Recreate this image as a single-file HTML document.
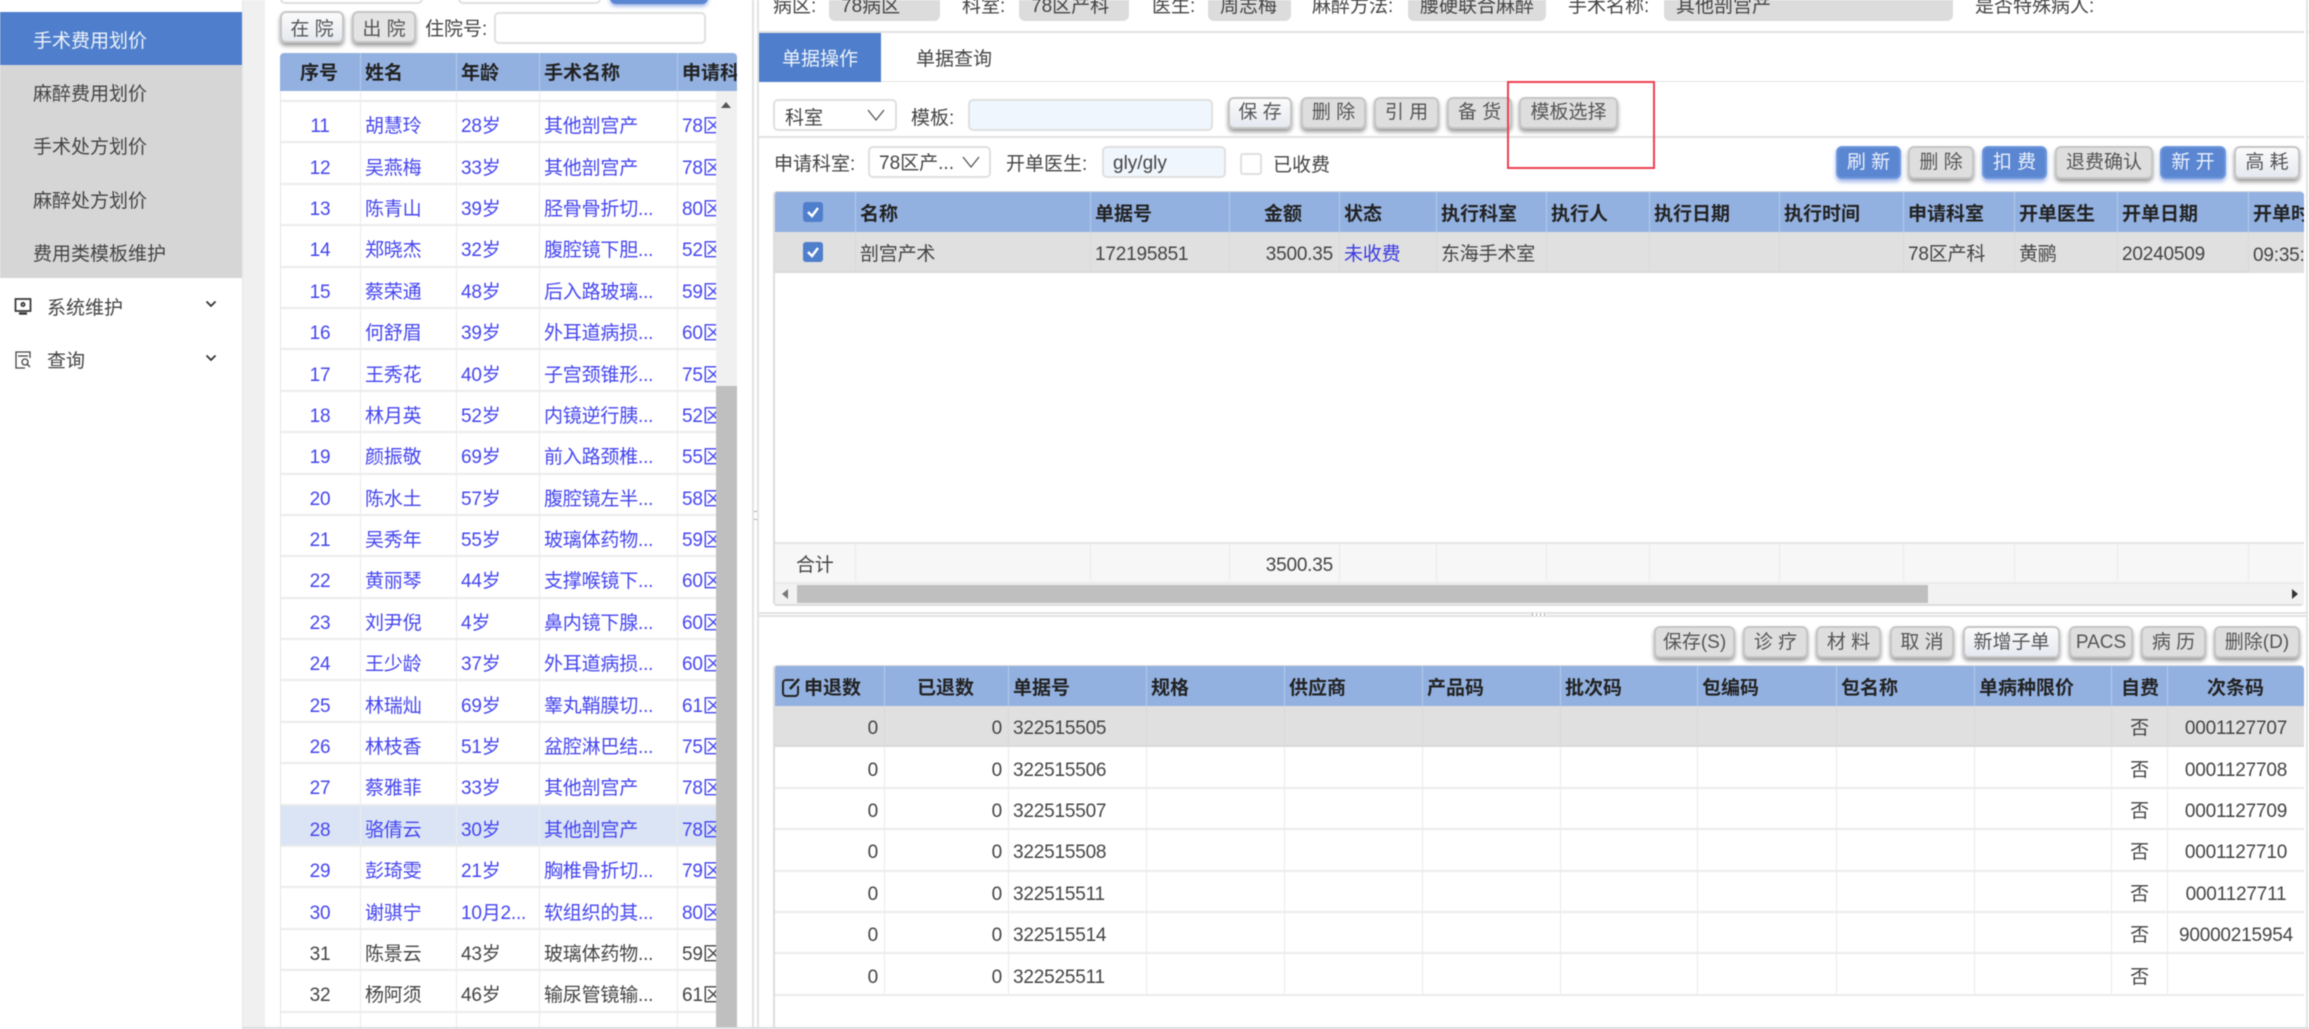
<!DOCTYPE html>
<html lang="zh"><head><meta charset="utf-8"><title>手术费用划价</title>
<style>
html,body{margin:0;padding:0;width:2309px;height:1029px;overflow:hidden;background:#fff}
body{position:relative;font:19px/26px "Liberation Sans","Noto Sans CJK SC",sans-serif;color:#444;filter:blur(.4px)}
.a{position:absolute;box-sizing:border-box;white-space:nowrap}
.nav{left:0;width:242px;height:53.3px;line-height:59px;padding-left:33px;background:#d6d6d6;color:#444}
.f{border:2px solid #e0e0e0;border-radius:5px;background:#fff;height:32px}
.g{background:#dcdcdc;border-radius:0 0 6px 6px;height:21px;top:0;line-height:14px;padding-left:12px;color:#444}
.l{line-height:26px;color:#444}
.b{box-sizing:border-box;position:absolute;white-space:nowrap;text-align:center;border:2px solid #c6c6c6;border-radius:6px;background:#dedede;color:#555;box-shadow:0 3px 4px rgba(0,0,0,.4)}
.b.w{background:linear-gradient(#fbfbfb,#e6e9f0)}
.b.u{background:#5b86d2;border-color:#6f97dc;color:#eaf0fb;box-shadow:0 3px 4px rgba(70,110,210,.5)}
.t1{height:32px;top:97px;line-height:28px}.t2{height:33px;top:146px;line-height:29px}.t3{height:32px;top:626px;line-height:30px}
table{position:absolute;border-collapse:separate;border-spacing:0;table-layout:fixed}
td,th{box-sizing:border-box;padding:0 0 0 4px;white-space:nowrap;overflow:hidden;border-right:1px solid #ebebeb;border-bottom:2px solid #ebebeb;font-weight:normal;text-align:left}
th{background:#93b1e0;font-weight:bold;color:#222;border-right:1px solid #b4c9ea;border-bottom:0}
.c{text-align:center;padding:0}.r{text-align:right;padding:0 6px 0 0}
.n td{letter-spacing:-.2px}
#lh th{padding-top:3px}
#t1 th,#t2 th{padding-top:6px}
#lt td{height:41.4px;color:#4545f0;padding-top:11px}
#lt tr.k td{color:#444}
#lt tr.s td{background:#dae4f4}
#t1 td,#t2 td{height:41.4px;padding-top:7px}
#t1b td{padding-top:6px;border-top:2px solid #e4e4e4}
.gy td{background:#e0e0e0;border-color:#dadada}
.cb{display:block;position:absolute;width:20px;height:20px;border-radius:3px;background:#4f7fcc}
.sh{position:absolute}
</style></head>
<body>
<!-- sidebar -->
<div class="a nav" style="top:12px;background:#4f7fcc;color:#eef3fb;height:53px">手术费用划价</div>
<div class="a nav" style="top:65px">麻醉费用划价</div>
<div class="a nav" style="top:118.3px">手术处方划价</div>
<div class="a nav" style="top:171.6px">麻醉处方划价</div>
<div class="a nav" style="top:224.9px">费用类模板维护</div>
<div class="a" style="left:47px;top:296px">系统维护</div>
<div class="a" style="left:47px;top:349px">查询</div>
<svg class="sh" style="left:14px;top:297px" width="20" height="20" viewBox="0 0 20 20" fill="none" stroke="#333" stroke-width="1.7"><rect x="1.500" y="2" width="15" height="12"/><circle cx="9" cy="7.500" r="1.600"/><path d="M5 16.500h8" stroke-width="2.400"/></svg>
<svg class="sh" style="left:14px;top:350px" width="20" height="20" viewBox="0 0 20 20" fill="none" stroke="#444" stroke-width="1.300"><path d="M16 8V2H2v16h9"/><path d="M4 6h10"/><circle cx="11" cy="12" r="3"/><path d="M13 14l3 3"/></svg>
<svg class="sh" style="left:205px;top:299px" width="12" height="10" viewBox="0 0 12 10" fill="none" stroke="#333" stroke-width="1.800"><path d="M1.500 2.500L6 7l4.500-4.500"/></svg>
<svg class="sh" style="left:205px;top:353px" width="12" height="10" viewBox="0 0 12 10" fill="none" stroke="#333" stroke-width="1.800"><path d="M1.500 2.500L6 7l4.500-4.500"/></svg>
<!-- gutters -->
<div class="a" style="left:242px;top:0;width:23px;height:1029px;background:#f0f0f0;border-left:1px solid #e8e8e8"></div>
<div class="a" style="left:737px;top:0;width:15px;height:1029px;background:#fff"></div>
<div class="a" style="left:752px;top:0;width:7px;height:1029px;background:#fff;border-left:2px solid #e2e2e2;border-right:2px solid #e2e2e2"></div>
<div class="a" style="left:754px;top:511px;width:3px;height:9px;border-top:1px solid #aaa;border-bottom:1px solid #aaa"></div>
<!-- left filter -->
<div class="a f" style="left:280px;top:-20px;width:143px;height:24px"></div>
<div class="a f" style="left:458px;top:-20px;width:143px;height:24px"></div>
<div class="a" style="left:610px;top:-20px;width:98px;height:24px;background:#5b86d2;border-radius:6px;box-shadow:0 2px 4px rgba(70,110,210,.6)"></div>
<div class="b w" style="left:280px;top:11px;width:64px;height:32px;line-height:33px">在 院</div>
<div class="b w" style="left:352px;top:11px;width:64px;height:32px;line-height:33px;background:#e4e4e4">出 院</div>
<div class="a l" style="left:425px;top:17px">住院号:</div>
<div class="a f" style="left:494px;top:12px;width:212px"></div>
<!-- left table -->
<div class="a" style="left:280px;top:53px;width:457px;height:38px;overflow:hidden;border-radius:4px 4px 0 0">
<table id="lh" style="left:0;top:0;width:457px"><colgroup><col style="width:81px"><col style="width:96px"><col style="width:83px"><col style="width:138px"><col style="width:59px"></colgroup>
<tr style="height:38px"><th style="padding-left:20px">序号</th><th>姓名</th><th>年龄</th><th>手术名称</th><th style="border:0">申请科</th></tr></table></div>
<div class="a" style="left:280px;top:91px;width:436px;height:938px;overflow:hidden;border-left:1px solid #e4e4e4">
<table class="n" id="lt" style="left:-1px;top:-30.400px;width:437px"><colgroup><col style="width:81px"><col style="width:96px"><col style="width:83px"><col style="width:138px"><col style="width:39px"></colgroup>
<tr><td></td><td></td><td></td><td></td><td></td></tr>
<tr><td class="c">11</td><td>胡慧玲</td><td>28岁</td><td>其他剖宫产</td><td>78区</td></tr>
<tr><td class="c">12</td><td>吴燕梅</td><td>33岁</td><td>其他剖宫产</td><td>78区</td></tr>
<tr><td class="c">13</td><td>陈青山</td><td>39岁</td><td>胫骨骨折切...</td><td>80区</td></tr>
<tr><td class="c">14</td><td>郑晓杰</td><td>32岁</td><td>腹腔镜下胆...</td><td>52区</td></tr>
<tr><td class="c">15</td><td>蔡荣通</td><td>48岁</td><td>后入路玻璃...</td><td>59区</td></tr>
<tr><td class="c">16</td><td>何舒眉</td><td>39岁</td><td>外耳道病损...</td><td>60区</td></tr>
<tr><td class="c">17</td><td>王秀花</td><td>40岁</td><td>子宫颈锥形...</td><td>75区</td></tr>
<tr><td class="c">18</td><td>林月英</td><td>52岁</td><td>内镜逆行胰...</td><td>52区</td></tr>
<tr><td class="c">19</td><td>颜振敬</td><td>69岁</td><td>前入路颈椎...</td><td>55区</td></tr>
<tr><td class="c">20</td><td>陈水土</td><td>57岁</td><td>腹腔镜左半...</td><td>58区</td></tr>
<tr><td class="c">21</td><td>吴秀年</td><td>55岁</td><td>玻璃体药物...</td><td>59区</td></tr>
<tr><td class="c">22</td><td>黄丽琴</td><td>44岁</td><td>支撑喉镜下...</td><td>60区</td></tr>
<tr><td class="c">23</td><td>刘尹倪</td><td>4岁</td><td>鼻内镜下腺...</td><td>60区</td></tr>
<tr><td class="c">24</td><td>王少龄</td><td>37岁</td><td>外耳道病损...</td><td>60区</td></tr>
<tr><td class="c">25</td><td>林瑞灿</td><td>69岁</td><td>睾丸鞘膜切...</td><td>61区</td></tr>
<tr><td class="c">26</td><td>林枝香</td><td>51岁</td><td>盆腔淋巴结...</td><td>75区</td></tr>
<tr><td class="c">27</td><td>蔡雅菲</td><td>33岁</td><td>其他剖宫产</td><td>78区</td></tr>
<tr class="s"><td class="c">28</td><td>骆倩云</td><td>30岁</td><td>其他剖宫产</td><td>78区</td></tr>
<tr><td class="c">29</td><td>彭琦雯</td><td>21岁</td><td>胸椎骨折切...</td><td>79区</td></tr>
<tr><td class="c">30</td><td>谢骐宁</td><td>10月2...</td><td>软组织的其...</td><td>80区</td></tr>
<tr class="k"><td class="c">31</td><td>陈景云</td><td>43岁</td><td>玻璃体药物...</td><td>59区</td></tr>
<tr class="k"><td class="c">32</td><td>杨阿须</td><td>46岁</td><td>输尿管镜输...</td><td>61区</td></tr>
<tr class="k"><td class="c">33</td><td>黄大品</td><td>36岁</td><td>经皮椎间孔...</td><td>76区</td></tr>
</table></div>
<div class="a" style="left:716px;top:91px;width:21px;height:938px;background:#f0f0f0"></div>
<div class="a" style="left:716px;top:386px;width:21px;height:643px;background:#bfbfbf"></div>
<svg class="sh" style="left:720px;top:101px" width="12" height="8" viewBox="0 0 12 8"><path d="M6 1L11 7H1z" fill="#555"/></svg>
<!-- top info -->
<div class="a l" style="left:773px;top:-6px">病区:</div><div class="a g" style="left:829px;width:111px">78病区</div>
<div class="a l" style="left:962px;top:-6px">科室:</div><div class="a g" style="left:1019px;width:110px">78区产科</div>
<div class="a l" style="left:1152px;top:-6px">医生:</div><div class="a g" style="left:1208px;width:83px">周志梅</div>
<div class="a l" style="left:1312px;top:-6px">麻醉方法:</div><div class="a g" style="left:1408px;width:138px">腰硬联合麻醉</div>
<div class="a l" style="left:1568px;top:-6px">手术名称:</div><div class="a g" style="left:1664px;width:289px">其他剖宫产</div>
<div class="a l" style="left:1975px;top:-6px">是否特殊病人:</div>
<div class="a" style="left:759px;top:31px;width:1550px;height:2px;background:#e2e2e2"></div>
<!-- tabs -->
<div class="a" style="left:759px;top:33px;width:122px;height:49px;background:#4f7fcc;color:#eef3fb;line-height:54px;text-align:center">单据操作</div>
<div class="a" style="left:916px;top:33px;line-height:54px;color:#444">单据查询</div>
<div class="a" style="left:881px;top:81px;width:1428px;height:1px;background:#e4e4e4"></div>
<!-- row 2 -->
<div class="a f" style="left:773px;top:99px;width:124px;line-height:35px;padding-left:10px">科室</div>
<svg class="sh" style="left:866px;top:107px" width="20" height="16" viewBox="0 0 20 16" fill="none" stroke="#555" stroke-width="1.300"><path d="M2 3l8 10 8-10"/></svg>
<div class="a l" style="left:911px;top:106px">模板:</div>
<div class="a f" style="left:968px;top:99px;width:245px;background:#f0f6fd"></div>
<div class="b w t1" style="left:1228px;width:64px">保 存</div>
<div class="b t1" style="left:1301px;width:65px">删 除</div>
<div class="b t1" style="left:1374px;width:65px">引 用</div>
<div class="b t1" style="left:1447px;width:65px">备 货</div>
<div class="b t1" style="left:1519px;width:99px">模板选择</div>
<div class="a" style="left:759px;top:136px;width:1550px;height:2px;background:#e2e2e2"></div>
<div class="a" style="left:1507px;top:81px;width:148px;height:88px;border:2px solid #ef3f4f"></div>
<!-- row 3 -->
<div class="a l" style="left:774px;top:152px">申请科室:</div>
<div class="a f" style="left:868px;top:146px;width:123px;line-height:31px;padding-left:9px">78区产...</div>
<svg class="sh" style="left:961px;top:154px" width="20" height="16" viewBox="0 0 20 16" fill="none" stroke="#555" stroke-width="1.300"><path d="M2 3l8 10 8-10"/></svg>
<div class="a l" style="left:1006px;top:152px">开单医生:</div>
<div class="a f" style="left:1102px;top:146px;width:124px;background:#f0f6fd;line-height:32px;padding-left:9px">gly/gly</div>
<div class="a" style="left:1240px;top:153px;width:22px;height:22px;border:2px solid #e0e0e0;border-radius:3px"></div>
<div class="a l" style="left:1273px;top:153px">已收费</div>
<div class="b u t2" style="left:1836px;width:65px">刷 新</div>
<div class="b t2" style="left:1908px;width:66px">删 除</div>
<div class="b u t2" style="left:1982px;width:65px">扣 费</div>
<div class="b t2" style="left:2055px;width:98px">退费确认</div>
<div class="b u t2" style="left:2160px;width:66px">新 开</div>
<div class="b w t2" style="left:2234px;width:66px">高 耗</div>
<!-- table 1 -->
<div class="a" style="left:773px;top:191px;width:1531px;height:415px;border:1px solid #dcdcdc;border-width:1px 0 2px 2px;overflow:hidden;border-radius:4px">
<table class="n" id="t1" style="left:-1px;top:0;width:1530px"><colgroup><col style="width:82px"><col style="width:235px"><col style="width:139px"><col style="width:110px"><col style="width:97px"><col style="width:110px"><col style="width:103px"><col style="width:130px"><col style="width:124px"><col style="width:111px"><col style="width:103px"><col style="width:131px"><col style="width:55px"></colgroup>
<tr style="height:40px"><th></th><th>名称</th><th>单据号</th><th style="padding-left:34px">金额</th><th>状态</th><th>执行科室</th><th>执行人</th><th>执行日期</th><th>执行时间</th><th>申请科室</th><th>开单医生</th><th>开单日期</th><th style="border:0">开单时</th></tr>
<tr class="gy"><td></td><td>剖宫产术</td><td>172195851</td><td class="r">3500.35</td><td style="color:#3a3ae0">未收费</td><td>东海手术室</td><td></td><td></td><td></td><td>78区产科</td><td>黄鹂</td><td>20240509</td><td style="border:0">09:35:</td></tr>
</table>
<table class="n" id="t1b" style="left:-1px;top:350px;width:1530px;background:#f7f7f7"><colgroup><col style="width:82px"><col style="width:235px"><col style="width:139px"><col style="width:110px"><col style="width:97px"><col style="width:110px"><col style="width:103px"><col style="width:130px"><col style="width:124px"><col style="width:111px"><col style="width:103px"><col style="width:131px"><col style="width:55px"></colgroup>
<tr style="height:42px"><td style="padding-left:22px">合计</td><td></td><td></td><td class="r">3500.35</td><td></td><td></td><td></td><td></td><td></td><td></td><td></td><td></td><td style="border-right:0"></td></tr>
</table>
</div>
<div class="a" style="left:775px;top:584px;width:1529px;height:20px;background:#f2f2f2"></div>
<div class="a" style="left:797px;top:585px;width:1131px;height:18px;background:#bfbfbf"></div>
<svg class="sh" style="left:781px;top:588px" width="8" height="12" viewBox="0 0 8 12"><path d="M7 1L1 6l6 5z" fill="#777"/></svg>
<svg class="sh" style="left:2291px;top:588px" width="8" height="12" viewBox="0 0 8 12"><path d="M1 1l6 5-6 5z" fill="#333"/></svg>
<div class="a" style="left:2304px;top:0;width:2px;height:1029px;background:#fff"></div>
<div class="a" style="left:2306px;top:0;width:2px;height:1029px;background:#e4e4e4"></div>
<!-- splitter -->
<div class="a" style="left:759px;top:612px;width:1547px;height:5px;border-top:2px solid #e2e2e2;border-bottom:2px solid #e2e2e2"></div>
<div class="a" style="left:1532px;top:613px;width:14px;height:3px;background:repeating-linear-gradient(90deg,#aaa 0 1px,#fff 1px 4px)"></div>
<!-- toolbar -->
<div class="b t3" style="left:1654px;width:81px">保存(S)</div>
<div class="b t3" style="left:1743px;width:65px">诊 疗</div>
<div class="b t3" style="left:1816px;width:65px">材 料</div>
<div class="b t3" style="left:1890px;width:64px">取 消</div>
<div class="b w t3" style="left:1963px;width:97px">新增子单</div>
<div class="b t3" style="left:2069px;width:64px">PACS</div>
<div class="b t3" style="left:2141px;width:65px">病 历</div>
<div class="b t3" style="left:2214px;width:86px">删除(D)</div>
<!-- table 2 -->
<div class="a" style="left:773px;top:665px;width:1531px;height:364px;border:solid #dcdcdc;border-width:1px 0 2px 2px;overflow:hidden;border-radius:4px 4px 0 0">
<table class="n" id="t2" style="left:-1px;top:0;width:1530px"><colgroup><col style="width:111px"><col style="width:124px"><col style="width:138px"><col style="width:138px"><col style="width:138px"><col style="width:138px"><col style="width:137px"><col style="width:139px"><col style="width:138px"><col style="width:137px"><col style="width:56px"><col style="width:136px"></colgroup>
<tr style="height:40px"><th style="padding-left:30px">申退数</th><th style="padding-left:32px">已退数</th><th>单据号</th><th>规格</th><th>供应商</th><th>产品码</th><th>批次码</th><th>包编码</th><th>包名称</th><th>单病种限价</th><th style="padding-left:9px">自费</th><th style="border:0;padding-left:39px">次条码</th></tr>
<tr class="gy"><td class="r">0</td><td class="r">0</td><td>322515505</td><td></td><td></td><td></td><td></td><td></td><td></td><td></td><td class="c">否</td><td class="c" style="border-right:0">0001127707</td></tr>
<tr><td class="r">0</td><td class="r">0</td><td>322515506</td><td></td><td></td><td></td><td></td><td></td><td></td><td></td><td class="c">否</td><td class="c" style="border-right:0">0001127708</td></tr>
<tr><td class="r">0</td><td class="r">0</td><td>322515507</td><td></td><td></td><td></td><td></td><td></td><td></td><td></td><td class="c">否</td><td class="c" style="border-right:0">0001127709</td></tr>
<tr><td class="r">0</td><td class="r">0</td><td>322515508</td><td></td><td></td><td></td><td></td><td></td><td></td><td></td><td class="c">否</td><td class="c" style="border-right:0">0001127710</td></tr>
<tr><td class="r">0</td><td class="r">0</td><td>322515511</td><td></td><td></td><td></td><td></td><td></td><td></td><td></td><td class="c">否</td><td class="c" style="border-right:0">0001127711</td></tr>
<tr><td class="r">0</td><td class="r">0</td><td>322515514</td><td></td><td></td><td></td><td></td><td></td><td></td><td></td><td class="c">否</td><td class="c" style="border-right:0">90000215954</td></tr>
<tr><td class="r">0</td><td class="r">0</td><td>322525511</td><td></td><td></td><td></td><td></td><td></td><td></td><td></td><td class="c">否</td><td class="c" style="border-right:0"></td></tr>
</table></div>
<svg class="sh" style="left:781px;top:677px" width="21" height="21" viewBox="0 0 21 21" fill="none" stroke="#222" stroke-width="2"><path d="M13 3H5a3 3 0 0 0-3 3v10a3 3 0 0 0 3 3h9a3 3 0 0 0 3-3V9"/><path d="M9 12L18 2" stroke-width="2.600"/></svg>
<!-- checkboxes -->
<span class="cb" style="left:803px;top:202px"></span>
<svg class="sh" style="left:803px;top:202px" width="20" height="20" viewBox="0 0 20 20" fill="none" stroke="#fff" stroke-width="2.400"><path d="M5 10l4 4 6-8"/></svg>
<span class="cb" style="left:803px;top:242px"></span>
<svg class="sh" style="left:803px;top:242px" width="20" height="20" viewBox="0 0 20 20" fill="none" stroke="#fff" stroke-width="2.400"><path d="M5 10l4 4 6-8"/></svg>
<div class="a" style="left:242px;top:1027px;width:2067px;height:2px;background:#dcdcdc"></div>
</body></html>
